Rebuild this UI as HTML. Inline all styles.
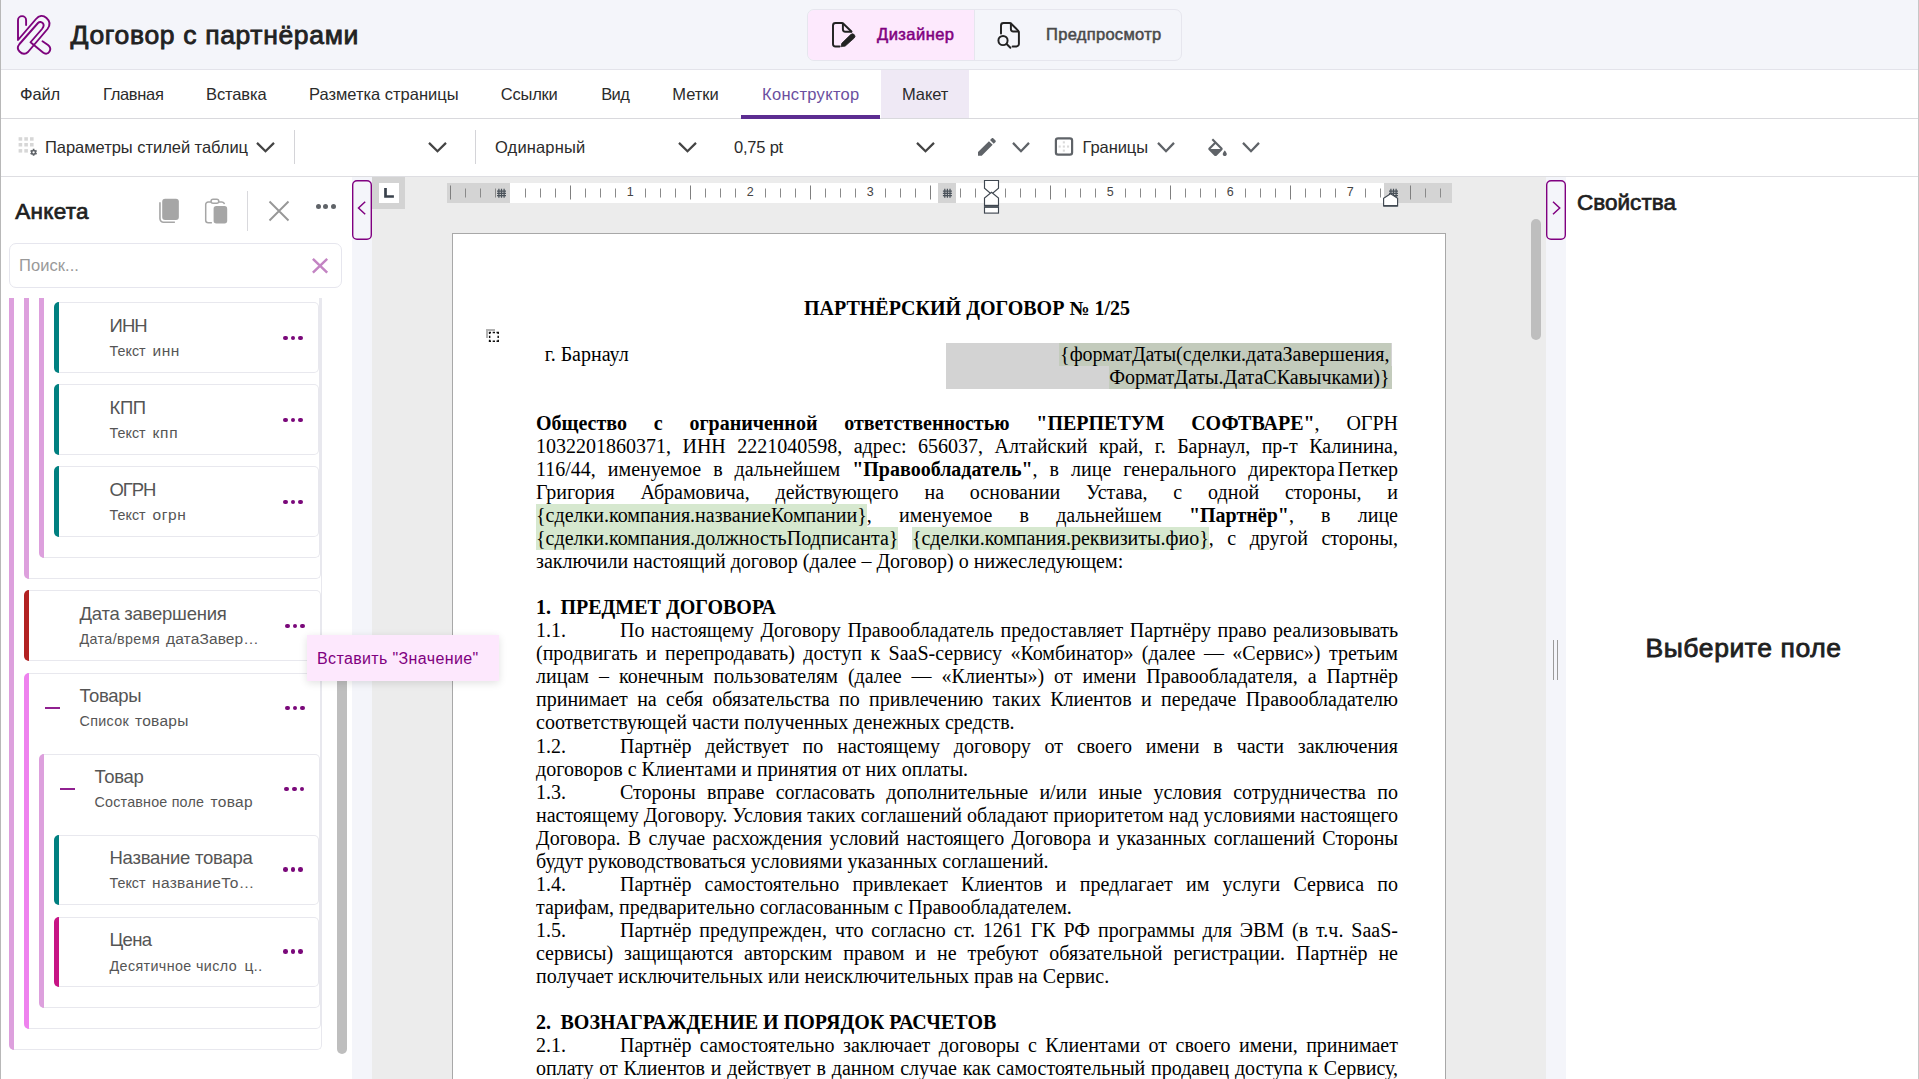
<!DOCTYPE html>
<html lang="ru">
<head>
<meta charset="utf-8">
<title>Договор с партнёрами</title>
<style>
html,body{margin:0;padding:0;}
body{width:1919px;height:1079px;position:relative;overflow:hidden;background:#fff;font-family:"Liberation Sans",sans-serif;}
.a{position:absolute;box-sizing:border-box;}
.t{position:absolute;white-space:pre;font-family:"Liberation Sans",sans-serif;}
svg{position:absolute;overflow:visible;}
/* tree */
.card{position:absolute;box-sizing:border-box;border:1px solid #e6e6ee;border-left:none;border-radius:0 6px 6px 0;background:#fff;}
.bar{position:absolute;box-sizing:border-box;width:5px;border-radius:5px 0 0 5px;}
.dots{position:absolute;width:20px;height:5px;}
.dots i{position:absolute;top:0;width:4.6px;height:4.6px;border-radius:50%;background:#7a087a;}
.dots i:nth-child(1){left:0}.dots i:nth-child(2){left:7.7px}.dots i:nth-child(3){left:15.4px}
/* document */
#page{position:absolute;left:452px;top:233px;width:994px;height:860px;background:#fff;border:1px solid #a8a8a8;box-sizing:border-box;}
.p{position:absolute;left:536px;width:862px;margin:0;font-family:"Liberation Serif",serif;font-size:20px;line-height:23px;color:#000;text-align:justify;white-space:nowrap;}
.p b{font-weight:700;}
.f{background:#d6e8cf;padding:0.4px 0 0.9px 0;}
.tab{display:inline-block;}
</style>
</head>
<body>
<!-- header -->
<div class="a" style="left:0;top:0;width:1919px;height:69px;background:#f4f5fa;"></div>
<div class="a" style="left:0;top:69px;width:1919px;height:1px;background:#e3e3ea;"></div>
<!-- logo -->
<svg style="left:8px;top:8px" width="60" height="54" viewBox="0 0 60 54" fill="none" stroke="#7d037d" stroke-width="1.9" stroke-linecap="round" stroke-linejoin="round">
<path d="M18.1 17 V12.2 A4.05 4.05 0 0 0 10 12.2 V32 L28 11 C31 7.5 35 7 38.5 10 C42.5 13.5 42.5 17 39.5 21 L20 44 C17.5 46.5 14.5 46.5 11.5 43.5 C9 41 9 39 11.5 36 L30 15 C31.5 13.5 33.5 13.8 34.8 15.2 C36.2 16.8 35.8 18.8 34 21 L22.5 34.25 L35 44.5 C37.5 46.5 40 46 41.5 43.5 C43 41 42.5 39 40 37 L34.5 33.25"/>
</svg>
<!-- mode switch -->
<div class="a" style="left:807px;top:9px;width:375px;height:52px;border:1px solid #e6e6ee;border-radius:7px;background:#f4f5fa;"></div>
<div class="a" style="left:808px;top:10px;width:166px;height:50px;border-radius:6px 0 0 6px;background:#fde9fd;"></div>
<div class="a" style="left:974px;top:10px;width:1px;height:50px;background:#e6e6ee;"></div>
<svg style="left:822px;top:14px" width="50" height="42" viewBox="0 0 50 42" fill="none" stroke="#222" stroke-width="1.95" stroke-linecap="round" stroke-linejoin="round">
<path d="M17.6 32.5 H13.5 a2.5 2.5 0 0 1 -2.5 -2.5 V11.5 a2.5 2.5 0 0 1 2.5 -2.5 H19.6 a2.6 2.6 0 0 1 1.8 0.7 L29.4 17.5"/>
<path d="M20.9 9.4 V15.2 a2.5 2.5 0 0 0 2.5 2.5 H29.3"/>
<path d="M19.1 32.3 L19.8 29.2 L28.7 20.6 a2.45 2.45 0 0 1 3.5 3.5 L23.3 32 Z" fill="#222" stroke-width="0.8"/>
</svg>
<svg style="left:986px;top:14px" width="50" height="42" viewBox="0 0 50 42" fill="none" stroke="#222" stroke-width="1.95" stroke-linecap="round" stroke-linejoin="round">
<path d="M15 19.4 V11.5 a2.5 2.5 0 0 1 2.5 -2.5 H23.4 a2.6 2.6 0 0 1 1.8 0.7 L32.1 16.6 a2.6 2.6 0 0 1 0.8 1.9 V29.9 a2.5 2.5 0 0 1 -2.5 2.5 H26.6"/>
<path d="M24.9 9.4 V14.9 a2.5 2.5 0 0 0 2.5 2.5 H32.3"/>
<circle cx="17" cy="26.5" r="4.6"/>
<path d="M20.6 30 L24.4 33.8"/>
</svg>
<!-- menu -->
<div class="a" style="left:0;top:70px;width:1919px;height:48px;background:#fff;"></div>
<div class="a" style="left:881px;top:70px;width:87.5px;height:48px;background:#efe9f5;"></div>
<div class="a" style="left:0;top:118px;width:1919px;height:1px;background:#d9d9dd;"></div>
<div class="a" style="left:741px;top:115px;width:139px;height:4px;background:#5c2d91;"></div>
<!-- toolbar -->
<div class="a" style="left:0;top:119px;width:1919px;height:57px;background:#fff;"></div>
<div class="a" style="left:0;top:176px;width:1919px;height:1px;background:#dedee2;"></div>
<div class="a" style="left:294px;top:130px;width:1px;height:34px;background:#d4d4d8;"></div>
<div class="a" style="left:475px;top:130px;width:1px;height:34px;background:#d4d4d8;"></div>
<!-- toolbar icons -->
<svg style="left:0;top:0" width="60" height="170" viewBox="0 0 60 170">
<g fill="#d7d7d7">
<rect x="18.6" y="137.2" width="3.6" height="3.5"/>
<rect x="24.3" y="137.2" width="3.6" height="3.5"/>
<rect x="30" y="137.2" width="3.6" height="3.5"/>
<rect x="18.6" y="143" width="3.6" height="3.5"/>
<rect x="24.3" y="143" width="3.6" height="3.5"/>
<rect x="30" y="143" width="3.6" height="3.5"/>
<rect x="18.6" y="149.1" width="3.6" height="3.5"/>
<rect x="24.3" y="149.1" width="3.6" height="3.5"/>
</g>
<path d="M35.16 153.20 L36.59 154.03 M33.60 154.10 L33.60 155.75 M32.04 153.20 L30.61 154.03 M32.04 151.40 L30.61 150.58 M33.60 150.50 L33.60 148.85 M35.16 151.40 L36.59 150.58" stroke="#5f6368" stroke-width="1.7" fill="none"/>
<circle cx="33.6" cy="152.3" r="1.9" fill="none" stroke="#5f6368" stroke-width="1.5"/>
</svg>
<svg style="left:256.5px;top:140px" width="17.0" height="14" viewBox="0 0 17.0 14"><path d="M0 2.9 L8.50 11.2 L17.00 2.9" stroke="#444" stroke-width="2.25" fill="none" stroke-linecap="butt" stroke-linejoin="miter"/></svg>
<svg style="left:428.5px;top:140px" width="17.0" height="14" viewBox="0 0 17.0 14"><path d="M0 2.9 L8.50 11.2 L17.00 2.9" stroke="#444" stroke-width="2.25" fill="none" stroke-linecap="butt" stroke-linejoin="miter"/></svg>
<svg style="left:678.8px;top:140px" width="17.0" height="14" viewBox="0 0 17.0 14"><path d="M0 2.9 L8.50 11.2 L17.00 2.9" stroke="#444" stroke-width="2.25" fill="none" stroke-linecap="butt" stroke-linejoin="miter"/></svg>
<svg style="left:916.8px;top:140px" width="17.0" height="14" viewBox="0 0 17.0 14"><path d="M0 2.9 L8.50 11.2 L17.00 2.9" stroke="#444" stroke-width="2.25" fill="none" stroke-linecap="butt" stroke-linejoin="miter"/></svg>
<svg style="left:1013.0px;top:140px" width="16.0" height="14" viewBox="0 0 16.0 14"><path d="M0 2.9 L8.00 11.2 L16.00 2.9" stroke="#5f6368" stroke-width="2.25" fill="none" stroke-linecap="butt" stroke-linejoin="miter"/></svg>
<svg style="left:1158.0px;top:140px" width="16.0" height="14" viewBox="0 0 16.0 14"><path d="M0 2.9 L8.00 11.2 L16.00 2.9" stroke="#5f6368" stroke-width="2.25" fill="none" stroke-linecap="butt" stroke-linejoin="miter"/></svg>
<svg style="left:1243.0px;top:140px" width="16.0" height="14" viewBox="0 0 16.0 14"><path d="M0 2.9 L8.00 11.2 L16.00 2.9" stroke="#5f6368" stroke-width="2.25" fill="none" stroke-linecap="butt" stroke-linejoin="miter"/></svg>
<!-- pencil -->
<svg style="left:0;top:0" width="1300" height="170" viewBox="0 0 1300 170">
<g transform="translate(975.03 135.03) scale(0.99)"><path fill="#5f6368" d="M3 17.25V21h3.75L17.81 9.94l-3.75-3.75L3 17.25zM20.71 7.04c.39-.39.39-1.02 0-1.41l-2.34-2.34c-.39-.39-1.02-.39-1.41 0l-1.83 1.83 3.75 3.75 1.83-1.83z"/></g>
<rect x="1055.9" y="138.3" width="16.2" height="16.4" rx="2.2" fill="none" stroke="#5f6368" stroke-width="2.2"/>
<g fill="#dadada"><rect x="1062.8" y="141.3" width="2.1" height="2.1"/><rect x="1062.8" y="145.5" width="2.1" height="2.1"/><rect x="1062.8" y="149.6" width="2.1" height="2.1"/><rect x="1058.6" y="145.5" width="2.1" height="2.1"/><rect x="1067" y="145.5" width="2.1" height="2.1"/></g>
<g transform="translate(1205.2 138.6) scale(1.03)"><path fill="#5f6368" d="M16.56 8.94L7.62 0 6.21 1.41l2.38 2.38-5.15 5.15c-.59.59-.59 1.54 0 2.12l5.5 5.5c.29.29.68.44 1.06.44s.77-.15 1.06-.44l5.5-5.5c.59-.58.59-1.53 0-2.12zM5.21 10L10 5.21 14.79 10H5.21zM19 11.5s-2 2.17-2 3.5c0 1.1.9 2 2 2s2-.9 2-2c0-1.33-2-3.5-2-3.5z"/></g>
</svg>

<!-- ============ left panel ============ -->
<div class="a" style="left:0;top:177px;width:352px;height:902px;background:#fff;"></div>
<!-- copy icon -->
<svg style="left:159px;top:198px" width="21" height="26" viewBox="0 0 21 26"><path d="M0.95 4.2 V20.6 a3.6 3.6 0 0 0 3.6 3.6 H15.9" fill="none" stroke="#a6a6a6" stroke-width="1.6" stroke-linecap="butt"/><rect x="3.2" y="0.7" width="16.65" height="21.3" rx="2.9" fill="#a6a6a6"/></svg>
<!-- paste icon -->
<svg style="left:204px;top:198px" width="25" height="27" viewBox="0 0 25 27"><path d="M7 4.1 H4.2 a2.5 2.5 0 0 0 -2.5 2.5 V22.2 a2.5 2.5 0 0 0 2.5 2.5 H7.9 M15 4.1 H17.9 a2.7 2.7 0 0 1 2.6 2.1" fill="none" stroke="#a6a6a6" stroke-width="1.5" stroke-linecap="butt"/><rect x="7.05" y="1.15" width="7.7" height="4" rx="2" fill="#fff" stroke="#a6a6a6" stroke-width="1.5"/><rect x="9.6" y="8" width="13.6" height="17.5" rx="2.7" fill="#a6a6a6"/></svg>
<div class="a" style="left:247px;top:191px;width:1px;height:40px;background:#d9d9dd;"></div>
<svg style="left:269px;top:201px" width="20" height="20" viewBox="0 0 20 20"><path d="M0.5 0.5 L19.5 19.5 M19.5 0.5 L0.5 19.5" stroke="#979797" stroke-width="1.9" fill="none"/></svg>
<div class="dots" style="left:315.8px;top:203.5px;"><i style="background:#5f6368;width:5px;height:5px"></i><i style="background:#5f6368;width:5px;height:5px;left:7.5px"></i><i style="background:#5f6368;width:5px;height:5px;left:15px"></i></div>
<!-- search -->
<div class="a" style="left:9px;top:243px;width:333px;height:45px;border:1px solid #e6e6ee;border-radius:7px;background:#fff;"></div>
<svg style="left:312px;top:258px" width="16" height="16" viewBox="0 0 16 16"><path d="M0.9 0.9 L15.2 14.6 M15.2 0.9 L0.9 14.6" stroke="#c384c3" stroke-width="2.5" fill="none"/></svg>
<div class="a" style="left:12px;top:298px;width:310px;height:752px;border:1px solid #e8e8ee;border-left:none;border-radius:0 5px 5px 0;border-top:none;border-top-right-radius:0;"></div>
<div class="a" style="left:9px;top:298px;width:5px;height:752px;background:#dda0dd;border-radius:0 0 0 5px;"></div>
<div class="a" style="left:27px;top:298px;width:294px;height:281px;border:1px solid #e8e8ee;border-left:none;border-radius:0 5px 5px 0;border-top:none;border-top-right-radius:0;"></div>
<div class="a" style="left:24px;top:298px;width:5px;height:281px;background:#dda0dd;border-radius:0 0 0 5px;"></div>
<div class="a" style="left:42px;top:298px;width:277.5px;height:260px;border:1px solid #e8e8ee;border-left:none;border-radius:0 5px 5px 0;border-top:none;border-top-right-radius:0;"></div>
<div class="a" style="left:39px;top:298px;width:5px;height:260px;background:#dda0dd;border-radius:0 0 0 5px;"></div>
<div class="a" style="left:57px;top:302px;width:261.5px;height:71px;border:1px solid #e8e8ee;border-left:none;border-radius:0 5px 5px 0;background:#fff;"></div>
<div class="a" style="left:54px;top:302px;width:5px;height:71px;background:#008080;border-radius:5px 0 0 5px;"></div>
<div class="dots" style="left:283px;top:335.5px;"><i></i><i></i><i></i></div>
<div class="a" style="left:57px;top:384px;width:261.5px;height:71px;border:1px solid #e8e8ee;border-left:none;border-radius:0 5px 5px 0;background:#fff;"></div>
<div class="a" style="left:54px;top:384px;width:5px;height:71px;background:#008080;border-radius:5px 0 0 5px;"></div>
<div class="dots" style="left:283px;top:417.5px;"><i></i><i></i><i></i></div>
<div class="a" style="left:57px;top:466px;width:261.5px;height:71px;border:1px solid #e8e8ee;border-left:none;border-radius:0 5px 5px 0;background:#fff;"></div>
<div class="a" style="left:54px;top:466px;width:5px;height:71px;background:#008080;border-radius:5px 0 0 5px;"></div>
<div class="dots" style="left:283px;top:499.5px;"><i></i><i></i><i></i></div>
<div class="a" style="left:27px;top:590px;width:294px;height:71px;border:1px solid #e8e8ee;border-left:none;border-radius:0 5px 5px 0;background:#fff;"></div>
<div class="a" style="left:24px;top:590px;width:5px;height:71px;background:#b22222;border-radius:5px 0 0 5px;"></div>
<div class="dots" style="left:285px;top:623.7px;"><i></i><i></i><i></i></div>
<div class="a" style="left:27px;top:673px;width:293.5px;height:356px;border:1px solid #e8e8ee;border-left:none;border-radius:0 5px 5px 0;"></div>
<div class="a" style="left:24px;top:673px;width:5px;height:356px;background:#ee82ee;border-radius:5px 0 0 5px;"></div>
<div class="dots" style="left:285px;top:705.7px;"><i></i><i></i><i></i></div>
<svg style="left:44.6px;top:705.55px" width="16" height="4" viewBox="0 0 16 4"><path d="M0 2 H15" stroke="#800080" stroke-width="1.75" fill="none"/></svg>
<div class="a" style="left:42px;top:754px;width:277.5px;height:254px;border:1px solid #e8e8ee;border-left:none;border-radius:0 5px 5px 0;"></div>
<div class="a" style="left:39px;top:754px;width:5px;height:254px;background:#dda0dd;border-radius:5px 0 0 5px;"></div>
<div class="dots" style="left:284.3px;top:786.5px;"><i></i><i></i><i></i></div>
<svg style="left:59.6px;top:786.7px" width="16" height="4" viewBox="0 0 16 4"><path d="M0 2 H15" stroke="#800080" stroke-width="1.75" fill="none"/></svg>
<div class="a" style="left:57px;top:835px;width:261.5px;height:70px;border:1px solid #e8e8ee;border-left:none;border-radius:0 5px 5px 0;background:#fff;"></div>
<div class="a" style="left:54px;top:835px;width:5px;height:70px;background:#008080;border-radius:5px 0 0 5px;"></div>
<div class="dots" style="left:283px;top:867.3px;"><i></i><i></i><i></i></div>
<div class="a" style="left:57px;top:917px;width:261.5px;height:70px;border:1px solid #e8e8ee;border-left:none;border-radius:0 5px 5px 0;background:#fff;"></div>
<div class="a" style="left:54px;top:917px;width:5px;height:70px;background:#c71585;border-radius:5px 0 0 5px;"></div>
<div class="dots" style="left:283px;top:949.2px;"><i></i><i></i><i></i></div>
<!-- left panel scrollbar -->
<div class="a" style="left:337px;top:650px;width:9.5px;height:404px;border-radius:5px;background:#bebebe;"></div>

<!-- left splitter -->
<div class="a" style="left:352px;top:177px;width:20px;height:902px;background:#f4f5fa;"></div>
<svg style="left:352px;top:180px" width="20" height="60" viewBox="0 0 20 60"><rect x="0.7" y="0.7" width="18.6" height="58.6" rx="4.3" fill="#f4f5fa" stroke="#800080" stroke-width="1.4"/></svg>
<svg style="left:352px;top:195px" width="20" height="26" viewBox="0 0 20 26"><path d="M13.2 6.7 L6.5 13 L13.2 19.3" stroke="#800080" stroke-width="1.5" fill="none" stroke-linecap="butt" stroke-linejoin="miter"/></svg>

<!-- ============ document area ============ -->
<div class="a" style="left:372px;top:177px;width:1174px;height:902px;background:#ececec;"></div>
<div class="a" style="left:372px;top:177px;width:33px;height:31.8px;background:#d3d3d3;"></div>
<div class="a" style="left:378.8px;top:182.8px;width:20.3px;height:20.1px;background:#fff;"></div>
<svg style="left:384px;top:188px" width="10" height="10" viewBox="0 0 10 10"><path d="M1.5 0 V8.5 H9.9" stroke="#3a424c" stroke-width="2.7" fill="none"/></svg>
<div class="a" style="left:447px;top:183px;width:1005px;height:20px;background:#fff;"></div>
<div class="a" style="left:447px;top:183px;width:63px;height:20px;background:#d4d4d4;"></div>
<div class="a" style="left:938px;top:183px;width:18px;height:20px;background:#d4d4d4;"></div>
<div class="a" style="left:1384px;top:183px;width:68px;height:20px;background:#d4d4d4;"></div>
<svg style="left:0;top:0" width="1919" height="230" viewBox="0 0 1919 230">
<rect x="450" y="185.5" width="1" height="14" fill="#7f7f7f"/>
<rect x="465" y="188.5" width="1" height="9" fill="#8a8a8a"/>
<rect x="480" y="188.5" width="1" height="9" fill="#8a8a8a"/>
<rect x="495" y="188.5" width="1" height="9" fill="#8a8a8a"/>
<rect x="525" y="188.5" width="1" height="9" fill="#8a8a8a"/>
<rect x="540" y="188.5" width="1" height="9" fill="#8a8a8a"/>
<rect x="555" y="188.5" width="1" height="9" fill="#8a8a8a"/>
<rect x="570" y="185.5" width="1" height="14" fill="#7f7f7f"/>
<rect x="585" y="188.5" width="1" height="9" fill="#8a8a8a"/>
<rect x="600" y="188.5" width="1" height="9" fill="#8a8a8a"/>
<rect x="615" y="188.5" width="1" height="9" fill="#8a8a8a"/>
<text x="630.3" y="196.4" font-family="Liberation Sans, sans-serif" font-size="12.5" fill="#444" text-anchor="middle">1</text>
<rect x="645" y="188.5" width="1" height="9" fill="#8a8a8a"/>
<rect x="660" y="188.5" width="1" height="9" fill="#8a8a8a"/>
<rect x="675" y="188.5" width="1" height="9" fill="#8a8a8a"/>
<rect x="690" y="185.5" width="1" height="14" fill="#7f7f7f"/>
<rect x="705" y="188.5" width="1" height="9" fill="#8a8a8a"/>
<rect x="720" y="188.5" width="1" height="9" fill="#8a8a8a"/>
<rect x="735" y="188.5" width="1" height="9" fill="#8a8a8a"/>
<text x="750.3" y="196.4" font-family="Liberation Sans, sans-serif" font-size="12.5" fill="#444" text-anchor="middle">2</text>
<rect x="765" y="188.5" width="1" height="9" fill="#8a8a8a"/>
<rect x="780" y="188.5" width="1" height="9" fill="#8a8a8a"/>
<rect x="795" y="188.5" width="1" height="9" fill="#8a8a8a"/>
<rect x="810" y="185.5" width="1" height="14" fill="#7f7f7f"/>
<rect x="825" y="188.5" width="1" height="9" fill="#8a8a8a"/>
<rect x="840" y="188.5" width="1" height="9" fill="#8a8a8a"/>
<rect x="855" y="188.5" width="1" height="9" fill="#8a8a8a"/>
<text x="870.3" y="196.4" font-family="Liberation Sans, sans-serif" font-size="12.5" fill="#444" text-anchor="middle">3</text>
<rect x="885" y="188.5" width="1" height="9" fill="#8a8a8a"/>
<rect x="900" y="188.5" width="1" height="9" fill="#8a8a8a"/>
<rect x="915" y="188.5" width="1" height="9" fill="#8a8a8a"/>
<rect x="930" y="185.5" width="1" height="14" fill="#7f7f7f"/>
<rect x="960" y="188.5" width="1" height="9" fill="#8a8a8a"/>
<rect x="975" y="188.5" width="1" height="9" fill="#8a8a8a"/>
<rect x="1005" y="188.5" width="1" height="9" fill="#8a8a8a"/>
<rect x="1020" y="188.5" width="1" height="9" fill="#8a8a8a"/>
<rect x="1035" y="188.5" width="1" height="9" fill="#8a8a8a"/>
<rect x="1050" y="185.5" width="1" height="14" fill="#7f7f7f"/>
<rect x="1065" y="188.5" width="1" height="9" fill="#8a8a8a"/>
<rect x="1080" y="188.5" width="1" height="9" fill="#8a8a8a"/>
<rect x="1095" y="188.5" width="1" height="9" fill="#8a8a8a"/>
<text x="1110.3" y="196.4" font-family="Liberation Sans, sans-serif" font-size="12.5" fill="#444" text-anchor="middle">5</text>
<rect x="1125" y="188.5" width="1" height="9" fill="#8a8a8a"/>
<rect x="1140" y="188.5" width="1" height="9" fill="#8a8a8a"/>
<rect x="1155" y="188.5" width="1" height="9" fill="#8a8a8a"/>
<rect x="1170" y="185.5" width="1" height="14" fill="#7f7f7f"/>
<rect x="1185" y="188.5" width="1" height="9" fill="#8a8a8a"/>
<rect x="1200" y="188.5" width="1" height="9" fill="#8a8a8a"/>
<rect x="1215" y="188.5" width="1" height="9" fill="#8a8a8a"/>
<text x="1230.3" y="196.4" font-family="Liberation Sans, sans-serif" font-size="12.5" fill="#444" text-anchor="middle">6</text>
<rect x="1245" y="188.5" width="1" height="9" fill="#8a8a8a"/>
<rect x="1260" y="188.5" width="1" height="9" fill="#8a8a8a"/>
<rect x="1275" y="188.5" width="1" height="9" fill="#8a8a8a"/>
<rect x="1290" y="185.5" width="1" height="14" fill="#7f7f7f"/>
<rect x="1305" y="188.5" width="1" height="9" fill="#8a8a8a"/>
<rect x="1320" y="188.5" width="1" height="9" fill="#8a8a8a"/>
<rect x="1335" y="188.5" width="1" height="9" fill="#8a8a8a"/>
<text x="1350.3" y="196.4" font-family="Liberation Sans, sans-serif" font-size="12.5" fill="#444" text-anchor="middle">7</text>
<rect x="1365" y="188.5" width="1" height="9" fill="#8a8a8a"/>
<rect x="1380" y="188.5" width="1" height="9" fill="#8a8a8a"/>
<rect x="1410" y="185.5" width="1" height="14" fill="#7f7f7f"/>
<rect x="1425" y="188.5" width="1" height="9" fill="#8a8a8a"/>
<rect x="1440" y="188.5" width="1" height="9" fill="#8a8a8a"/>
<g stroke="#4a525a" stroke-width="1.25" fill="none"><path d="M498.9 188.8 V197.8 M501.5 188.8 V197.8 M504.1 188.8 V197.8 M497 191 H506 M497 193.3 H506 M497 195.6 H506"/></g>
<g stroke="#4a525a" stroke-width="1.25" fill="none"><path d="M944.8 188.8 V197.8 M947.4 188.8 V197.8 M950 188.8 V197.8 M942.9 191 H951.9 M942.9 193.3 H951.9 M942.9 195.6 H951.9"/></g>
<g stroke="#4a525a" stroke-width="1.25" fill="none"><path d="M1390.9 188.8 V197.8 M1393.5 188.8 V197.8 M1396.1 188.8 V197.8 M1389 191 H1398 M1389 193.3 H1398 M1389 195.6 H1398"/></g>
<g stroke="#3f4750" stroke-width="1.15" fill="#fff" stroke-linejoin="miter"><path d="M984.5 180.5 H998.5 V188.2 L991.5 194.3 L984.5 188.2 Z"/><path d="M984.5 206.2 H998.5 V198 L991.5 192.2 L984.5 198 Z"/><rect x="984.5" y="207.3" width="14" height="5.8"/></g>
<path d="M984.5 205.6 H998.5" stroke="#3f4750" stroke-width="1.6"/>
<path d="M1383.6 206 H1397.6 V198.2 L1390.6 193.8 L1383.6 198.2 Z" stroke="#3f4750" stroke-width="1.15" fill="#fff"/>
<path d="M1383.6 205.8 H1397.6" stroke="#3f4750" stroke-width="1.5"/>
</svg>
<div id="page"></div>
<!-- table anchor -->
<svg style="left:486px;top:329px" width="14" height="14" viewBox="0 0 14 14"><path d="M1 9 V1 H9" stroke="#b2b2b2" stroke-width="2" fill="none"/><rect x="3.6" y="3.5" width="8.6" height="8.7" fill="#fff"/><path d="M2.8 3.55 H5 M6.7 3.55 H9 M10.5 3.55 H13 M2.8 12.2 H5 M6.7 12.2 H9 M10.5 12.2 H13 M3.65 2.7 V5 M3.65 6.7 V9 M3.65 10.7 V13 M12.2 2.7 V5 M12.2 6.7 V9 M12.2 10.7 V13" stroke="#111" stroke-width="1.45" fill="none"/></svg>
<div class="p" style="left:536px;top:297px;width:862px;text-align:center;"><b>ПАРТНЁРСКИЙ ДОГОВОР № 1/25</b></div>
<div class="a" style="left:946px;top:343px;width:445.5px;height:46px;background:#d3d3d3;"></div>
<div class="a" style="left:1059.3px;top:343px;width:332.2px;height:23px;background:#c3cbbc;"></div>
<div class="a" style="left:1109px;top:366px;width:282.5px;height:23px;background:#c3cbbc;"></div>
<div class="p" style="left:544.7px;top:343px;width:300px;text-align:left;">г. Барнаул</div>
<div class="p" style="left:989.5px;top:343px;width:400px;text-align:right;">{форматДаты(сделки.датаЗавершения,</div>
<div class="p" style="left:989.5px;top:366px;width:400px;text-align:right;">ФорматДаты.ДатаСКавычками)}</div>
<div class="p" style="left:536px;top:412px;width:862px;text-align:justify;text-align-last:justify;"><b>Общество с ограниченной ответственностью "ПЕРПЕТУМ СОФТВАРЕ"</b>, ОГРН</div>
<div class="p" style="left:536px;top:435px;width:862px;text-align:justify;text-align-last:justify;">1032201860371, ИНН 2221040598, адрес: 656037, Алтайский край, г. Барнаул, пр-т Калинина,</div>
<div class="p" style="left:536px;top:458px;width:862px;text-align:justify;text-align-last:justify;">116/44, именуемое в дальнейшем <b>"Правообладатель"</b>, в лице генерального директора<span style="display:inline-block;width:3px"></span>Петкер</div>
<div class="p" style="left:536px;top:481px;width:862px;text-align:justify;text-align-last:justify;">Григория Абрамовича, действующего на основании Устава, с одной стороны, и</div>
<div class="p" style="left:536px;top:504px;width:862px;text-align:justify;text-align-last:justify;"><span class="f">{сделки.компания.названиеКомпании}</span>, именуемое в дальнейшем <b>"Партнёр"</b>, в лице</div>
<div class="p" style="left:536px;top:527px;width:862px;text-align:justify;text-align-last:justify;"><span class="f">{сделки.компания.должностьПодписанта}</span> <span class="f">{сделки.компания.реквизиты.фио}</span>, с другой стороны,</div>
<div class="p" style="left:536px;top:550px;width:862px;text-align:left;">заключили настоящий договор (далее – Договор) о нижеследующем:</div>
<div class="p" style="left:536px;top:596px;width:862px;text-align:left;"><b>1.<span style="display:inline-block;width:9.5px"></span>ПРЕДМЕТ ДОГОВОРА</b></div>
<div class="p" style="left:536px;top:619px;width:80px;text-align:left;">1.1.</div>
<div class="p" style="left:620px;top:619px;width:778px;text-align:justify;text-align-last:justify;">По настоящему Договору Правообладатель предоставляет Партнёру право реализовывать</div>
<div class="p" style="left:536px;top:642px;width:862px;text-align:justify;text-align-last:justify;">(продвигать и перепродавать) доступ к SaaS-сервису «Комбинатор» (далее — «Сервис») третьим</div>
<div class="p" style="left:536px;top:665px;width:862px;text-align:justify;text-align-last:justify;">лицам – конечным пользователям (далее — «Клиенты») от имени Правообладателя, а Партнёр</div>
<div class="p" style="left:536px;top:688px;width:862px;text-align:justify;text-align-last:justify;">принимает на себя обязательства по привлечению таких Клиентов и передаче Правообладателю</div>
<div class="p" style="left:536px;top:711px;width:862px;text-align:left;">соответствующей части полученных денежных средств.</div>
<div class="p" style="left:536px;top:735px;width:80px;text-align:left;">1.2.</div>
<div class="p" style="left:620px;top:735px;width:778px;text-align:justify;text-align-last:justify;">Партнёр действует по настоящему договору от своего имени в части заключения</div>
<div class="p" style="left:536px;top:758px;width:862px;text-align:left;">договоров с Клиентами и принятия от них оплаты.</div>
<div class="p" style="left:536px;top:781px;width:80px;text-align:left;">1.3.</div>
<div class="p" style="left:620px;top:781px;width:778px;text-align:justify;text-align-last:justify;">Стороны вправе согласовать дополнительные и/или иные условия сотрудничества по</div>
<div class="p" style="left:536px;top:804px;width:862px;text-align:justify;text-align-last:justify;">настоящему Договору. Условия таких соглашений обладают приоритетом над условиями настоящего</div>
<div class="p" style="left:536px;top:827px;width:862px;text-align:justify;text-align-last:justify;">Договора. В случае расхождения условий настоящего Договора и указанных соглашений Стороны</div>
<div class="p" style="left:536px;top:850px;width:862px;text-align:left;">будут руководствоваться условиями указанных соглашений.</div>
<div class="p" style="left:536px;top:873px;width:80px;text-align:left;">1.4.</div>
<div class="p" style="left:620px;top:873px;width:778px;text-align:justify;text-align-last:justify;">Партнёр самостоятельно привлекает Клиентов и предлагает им услуги Сервиса по</div>
<div class="p" style="left:536px;top:896px;width:862px;text-align:left;">тарифам, предварительно согласованным с Правообладателем.</div>
<div class="p" style="left:536px;top:919px;width:80px;text-align:left;">1.5.</div>
<div class="p" style="left:620px;top:919px;width:778px;text-align:justify;text-align-last:justify;">Партнёр предупрежден, что согласно ст. 1261 ГК РФ программы для ЭВМ (в т.ч. SaaS-</div>
<div class="p" style="left:536px;top:942px;width:862px;text-align:justify;text-align-last:justify;">сервисы) защищаются авторским правом и не требуют обязательной регистрации. Партнёр не</div>
<div class="p" style="left:536px;top:965px;width:862px;text-align:left;">получает исключительных или неисключительных прав на Сервис.</div>
<div class="p" style="left:536px;top:1011px;width:862px;text-align:left;"><b>2.<span style="display:inline-block;width:9.5px"></span>ВОЗНАГРАЖДЕНИЕ И ПОРЯДОК РАСЧЕТОВ</b></div>
<div class="p" style="left:536px;top:1034px;width:80px;text-align:left;">2.1.</div>
<div class="p" style="left:620px;top:1034px;width:778px;text-align:justify;text-align-last:justify;">Партнёр самостоятельно заключает договоры с Клиентами от своего имени, принимает</div>
<div class="p" style="left:536px;top:1057px;width:862px;text-align:justify;text-align-last:justify;">оплату от Клиентов и действует в данном случае как самостоятельный продавец доступа к Сервису,</div>
<!-- doc scrollbar -->
<div class="a" style="left:1531px;top:219px;width:9.6px;height:121px;border-radius:5px;background:#bebebe;"></div>

<!-- right splitter -->
<div class="a" style="left:1546px;top:177px;width:20px;height:902px;background:#f4f5fa;"></div>
<svg style="left:1546px;top:180px" width="20" height="60" viewBox="0 0 20 60"><rect x="0.7" y="0.7" width="18.6" height="58.6" rx="4.3" fill="#f4f5fa" stroke="#800080" stroke-width="1.4"/></svg>
<svg style="left:1546px;top:195px" width="20" height="26" viewBox="0 0 20 26"><path d="M7 6.7 L13.7 13 L7 19.3" stroke="#800080" stroke-width="1.5" fill="none" stroke-linecap="butt" stroke-linejoin="miter"/></svg>
<div class="a" style="left:1553px;top:640px;width:1px;height:40px;background:#9a9a9a;"></div>
<div class="a" style="left:1557px;top:640px;width:1px;height:40px;background:#9a9a9a;"></div>
<!-- right panel -->
<div class="a" style="left:1566px;top:177px;width:353px;height:902px;background:#fff;"></div>
<!-- page edges -->
<div class="a" style="left:0;top:0;width:1px;height:1079px;background:#b8b8b8;"></div>
<div class="a" style="left:1917.5px;top:0;width:1.5px;height:1079px;background:#c6c6c6;"></div>

<!-- tooltip -->
<div class="a" style="left:307px;top:635px;width:192px;height:46px;background:#fde8fd;box-shadow:0 2px 8px rgba(0,0,0,0.12);"></div>
<div class="t" style="left:70.5px;top:21.9px;font-size:26.5px;line-height:26.5px;font-weight:400;color:#222;letter-spacing:0.660px;-webkit-text-stroke:0.85px currentColor;">Договор с партнёрами</div>
<div class="t" style="left:877.0px;top:25.9px;font-size:16.5px;line-height:16.5px;font-weight:400;color:#800080;letter-spacing:0.459px;-webkit-text-stroke:0.53px currentColor;">Дизайнер</div>
<div class="t" style="left:1046.0px;top:25.9px;font-size:16.5px;line-height:16.5px;font-weight:400;color:#4a4a4a;letter-spacing:0.298px;-webkit-text-stroke:0.53px currentColor;">Предпросмотр</div>
<div class="t" style="left:20.0px;top:86.3px;font-size:16.5px;line-height:16.5px;font-weight:400;color:#2b2b2b;letter-spacing:-0.145px;">Файл</div>
<div class="t" style="left:103.0px;top:86.3px;font-size:16.5px;line-height:16.5px;font-weight:400;color:#2b2b2b;letter-spacing:-0.330px;">Главная</div>
<div class="t" style="left:206.0px;top:86.3px;font-size:16.5px;line-height:16.5px;font-weight:400;color:#2b2b2b;letter-spacing:-0.118px;">Вставка</div>
<div class="t" style="left:309.0px;top:86.3px;font-size:16.5px;line-height:16.5px;font-weight:400;color:#2b2b2b;letter-spacing:-0.011px;">Разметка страницы</div>
<div class="t" style="left:500.8px;top:86.3px;font-size:16.5px;line-height:16.5px;font-weight:400;color:#2b2b2b;letter-spacing:-0.216px;">Ссылки</div>
<div class="t" style="left:601.2px;top:86.3px;font-size:16.5px;line-height:16.5px;font-weight:400;color:#2b2b2b;letter-spacing:-0.586px;">Вид</div>
<div class="t" style="left:672.3px;top:86.3px;font-size:16.5px;line-height:16.5px;font-weight:400;color:#2b2b2b;letter-spacing:-0.032px;">Метки</div>
<div class="t" style="left:762.0px;top:86.3px;font-size:16.5px;line-height:16.5px;font-weight:400;color:#6b4fa0;letter-spacing:0.320px;">Конструктор</div>
<div class="t" style="left:902.0px;top:86.3px;font-size:16.5px;line-height:16.5px;font-weight:400;color:#2b2b2b;letter-spacing:-0.101px;">Макет</div>
<div class="t" style="left:45.0px;top:138.8px;font-size:16.5px;line-height:16.5px;font-weight:400;color:#2b2b2b;letter-spacing:-0.032px;">Параметры стилей таблиц</div>
<div class="t" style="left:495.0px;top:138.8px;font-size:16.5px;line-height:16.5px;font-weight:400;color:#2b2b2b;letter-spacing:0.146px;">Одинарный</div>
<div class="t" style="left:734.0px;top:138.8px;font-size:16.5px;line-height:16.5px;font-weight:400;color:#2b2b2b;letter-spacing:-0.210px;">0,75 pt</div>
<div class="t" style="left:1082.5px;top:138.8px;font-size:16.5px;line-height:16.5px;font-weight:400;color:#2b2b2b;letter-spacing:-0.071px;">Границы</div>
<div class="t" style="left:15.3px;top:201.2px;font-size:22.5px;line-height:22.5px;font-weight:400;color:#1f1f1f;letter-spacing:0.271px;-webkit-text-stroke:0.72px currentColor;">Анкета</div>
<div class="t" style="left:19.0px;top:257.3px;font-size:16.5px;line-height:16.5px;font-weight:400;color:#999;letter-spacing:0.064px;">Поиск...</div>
<div class="t" style="left:109.6px;top:317.2px;font-size:18.5px;line-height:18.5px;font-weight:400;color:#555;letter-spacing:-1.010px;">ИНН</div>
<div class="t" style="left:109.6px;top:344.2px;font-size:14.3px;line-height:14.3px;font-weight:400;color:#555;letter-spacing:0.000px;">Текст</div>
<div class="t" style="left:152.5px;top:343.2px;font-size:15.5px;line-height:15.5px;font-weight:400;color:#555;letter-spacing:0.573px;">инн</div>
<div class="t" style="left:109.6px;top:399.2px;font-size:18.5px;line-height:18.5px;font-weight:400;color:#555;letter-spacing:-0.458px;">КПП</div>
<div class="t" style="left:109.6px;top:426.2px;font-size:14.3px;line-height:14.3px;font-weight:400;color:#555;letter-spacing:0.000px;">Текст</div>
<div class="t" style="left:152.5px;top:425.2px;font-size:15.5px;line-height:15.5px;font-weight:400;color:#555;letter-spacing:0.807px;">кпп</div>
<div class="t" style="left:109.6px;top:481.2px;font-size:18.5px;line-height:18.5px;font-weight:400;color:#555;letter-spacing:-1.152px;">ОГРН</div>
<div class="t" style="left:109.6px;top:508.2px;font-size:14.3px;line-height:14.3px;font-weight:400;color:#555;letter-spacing:0.000px;">Текст</div>
<div class="t" style="left:152.5px;top:507.2px;font-size:15.5px;line-height:15.5px;font-weight:400;color:#555;letter-spacing:0.633px;">огрн</div>
<div class="t" style="left:79.5px;top:605.0px;font-size:18.5px;line-height:18.5px;font-weight:400;color:#555;letter-spacing:-0.252px;">Дата завершения</div>
<div class="t" style="left:79.5px;top:632.2px;font-size:14.3px;line-height:14.3px;font-weight:400;color:#555;letter-spacing:0.380px;">Дата/время</div>
<div class="t" style="left:166.0px;top:631.2px;font-size:15.5px;line-height:15.5px;font-weight:400;color:#555;letter-spacing:0.134px;">датаЗавер…</div>
<div class="t" style="left:79.5px;top:687.0px;font-size:18.5px;line-height:18.5px;font-weight:400;color:#555;letter-spacing:-0.323px;">Товары</div>
<div class="t" style="left:79.5px;top:713.6px;font-size:14.3px;line-height:14.3px;font-weight:400;color:#555;letter-spacing:0.320px;">Список</div>
<div class="t" style="left:135.0px;top:712.6px;font-size:15.5px;line-height:15.5px;font-weight:400;color:#555;letter-spacing:0.283px;">товары</div>
<div class="t" style="left:94.6px;top:767.7px;font-size:18.5px;line-height:18.5px;font-weight:400;color:#555;letter-spacing:-0.269px;">Товар</div>
<div class="t" style="left:94.6px;top:795.2px;font-size:14.3px;line-height:14.3px;font-weight:400;color:#555;letter-spacing:0.192px;">Составное поле</div>
<div class="t" style="left:210.5px;top:794.2px;font-size:15.5px;line-height:15.5px;font-weight:400;color:#555;letter-spacing:0.328px;">товар</div>
<div class="t" style="left:109.5px;top:848.5px;font-size:18.5px;line-height:18.5px;font-weight:400;color:#555;letter-spacing:-0.257px;">Название товара</div>
<div class="t" style="left:109.5px;top:875.9px;font-size:14.3px;line-height:14.3px;font-weight:400;color:#555;letter-spacing:0.000px;">Текст</div>
<div class="t" style="left:152.0px;top:874.9px;font-size:15.5px;line-height:15.5px;font-weight:400;color:#555;letter-spacing:0.317px;">названиеТо…</div>
<div class="t" style="left:109.5px;top:930.8px;font-size:18.5px;line-height:18.5px;font-weight:400;color:#555;letter-spacing:-0.621px;">Цена</div>
<div class="t" style="left:109.5px;top:958.5px;font-size:14.3px;line-height:14.3px;font-weight:400;color:#555;letter-spacing:0.386px;">Десятичное число</div>
<div class="t" style="left:244.4px;top:957.5px;font-size:15.5px;line-height:15.5px;font-weight:400;color:#555;letter-spacing:0.233px;">ц..</div>
<div class="t" style="left:317.0px;top:651.0px;font-size:16px;line-height:16px;font-weight:400;color:#800080;letter-spacing:0.364px;">Вставить &quot;Значение&quot;</div>
<div class="t" style="left:1577.0px;top:192.3px;font-size:22.5px;line-height:22.5px;font-weight:400;color:#1f1f1f;letter-spacing:0.023px;-webkit-text-stroke:0.72px currentColor;">Свойства</div>
<div class="t" style="left:1645.5px;top:635.1px;font-size:26.5px;line-height:26.5px;font-weight:400;color:#1f1f1f;letter-spacing:0.575px;-webkit-text-stroke:0.85px currentColor;">Выберите поле</div>
</body>
</html>
